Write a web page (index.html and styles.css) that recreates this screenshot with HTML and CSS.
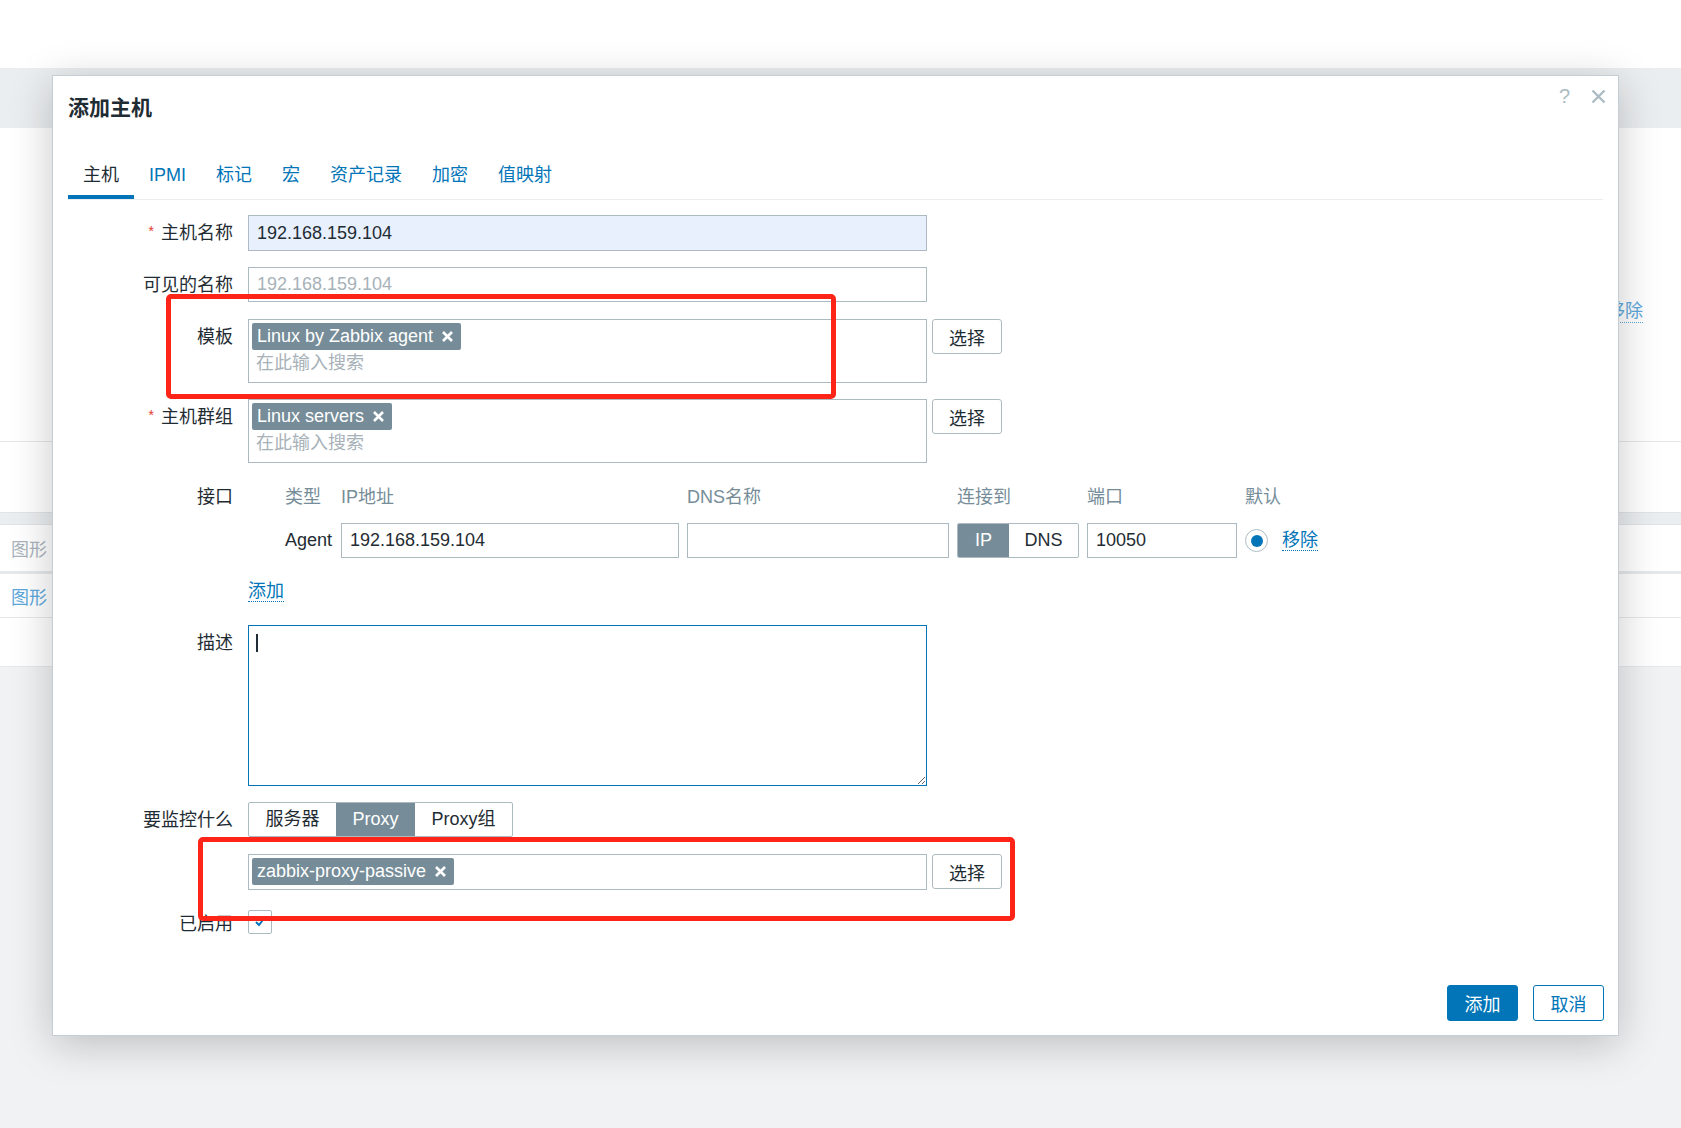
FILE: index.html
```html
<!DOCTYPE html>
<html lang="zh-CN">
<head>
<meta charset="utf-8">
<title>添加主机</title>
<link rel="stylesheet" href="styles.css">
</head>
<body>
<div class="page">
  <div class="page-top"></div>
  <div class="page-band"></div>
  <section class="page-panel">
    <div class="panel-row-tall"><a class="bg-link">移除</a></div>
    <div class="panel-row-short"></div>
  </section>
  <div class="page-strip"></div>
  <div class="table-row"><span class="bg-muted">图形</span></div>
  <div class="table-sep"></div>
  <div class="table-row table-row-2"><span class="bg-blue">图形</span></div>
  <div class="table-row-empty"></div>
</div>

<div class="dialog" role="dialog">
  <div class="dialog-head">
    <h4 class="dialog-title">添加主机</h4>
    <div class="dialog-tools">
      <span class="tool-help">?</span>
      <svg class="tool-close" width="15" height="15" viewBox="0 0 15 15"><path d="M1.5 1.5 L13.5 13.5 M13.5 1.5 L1.5 13.5" stroke="#acbbc2" stroke-width="2.4" fill="none"/></svg>
    </div>
  </div>

  <div class="dialog-body">
    <ul class="tabs">
      <li class="tab active">主机</li>
      <li class="tab">IPMI</li>
      <li class="tab">标记</li>
      <li class="tab">宏</li>
      <li class="tab">资产记录</li>
      <li class="tab">加密</li>
      <li class="tab">值映射</li>
    </ul>

    <div class="form">
      <div class="label req">主机名称</div>
      <div class="field"><input class="input filled" type="text" value="192.168.159.104"></div>

      <div class="label">可见的名称</div>
      <div class="field"><input class="input short" type="text" placeholder="192.168.159.104"></div>

      <div class="label">模板</div>
      <div class="field ms-row">
        <div class="ms">
          <div class="ms-tags">
            <span class="ms-tag">Linux by Zabbix agent<svg width="13" height="13" viewBox="0 0 13 13"><path d="M2 2 L11 11 M11 2 L2 11" stroke="#fff" stroke-width="2.6" fill="none"/></svg></span>
          </div>
          <input class="ms-search" type="text" placeholder="在此输入搜索">
        </div>
        <button class="btn-select" type="button">选择</button>
      </div>

      <div class="label req">主机群组</div>
      <div class="field ms-row">
        <div class="ms">
          <div class="ms-tags">
            <span class="ms-tag">Linux servers<svg width="13" height="13" viewBox="0 0 13 13"><path d="M2 2 L11 11 M11 2 L2 11" stroke="#fff" stroke-width="2.6" fill="none"/></svg></span>
          </div>
          <input class="ms-search" type="text" placeholder="在此输入搜索">
        </div>
        <button class="btn-select" type="button">选择</button>
      </div>

      <div class="label">接口</div>
      <div class="field">
        <div class="iface">
          <div class="iface-h">类型</div>
          <div class="iface-h">IP地址</div>
          <div class="iface-h">DNS名称</div>
          <div class="iface-h">连接到</div>
          <div class="iface-h">端口</div>
          <div class="iface-h">默认</div>
          <div></div>

          <div class="iface-type">Agent</div>
          <input class="input iface-input" type="text" value="192.168.159.104">
          <input class="input iface-input" type="text" value="">
          <div class="toggle"><span class="on">IP</span><span class="off">DNS</span></div>
          <input class="input iface-input" type="text" value="10050">
          <div class="radio"></div>
          <div class="iface-remove"><a class="link">移除</a></div>
        </div>
        <div class="iface-add"><a class="link">添加</a></div>
      </div>

      <div class="label">描述</div>
      <div class="field">
        <div class="ta-wrap">
          <textarea class="textarea"></textarea>
          <span class="caret"></span>
        </div>
      </div>

      <div class="label">要监控什么</div>
      <div class="field">
        <div class="seg"><span>服务器</span><span class="on">Proxy</span><span>Proxy组</span></div>
      </div>

      <div class="label"></div>
      <div class="field ms-row">
        <div class="ms single">
          <div class="ms-tags">
            <span class="ms-tag">zabbix-proxy-passive<svg width="13" height="13" viewBox="0 0 13 13"><path d="M2 2 L11 11 M11 2 L2 11" stroke="#fff" stroke-width="2.6" fill="none"/></svg></span>
          </div>
        </div>
        <button class="btn-select" type="button">选择</button>
      </div>

      <div class="label">已启用</div>
      <div class="field check-row">
        <span class="checkbox"><svg width="14" height="14" viewBox="0 0 14 14"><path d="M3 7 L6 10 L11 3.5" stroke="#0275b8" stroke-width="2" fill="none"/></svg></span>
      </div>
    </div>
  </div>

  <div class="dialog-foot">
    <button class="btn btn-primary" type="button">添加</button>
    <button class="btn btn-alt" type="button">取消</button>
  </div>
</div>

<div class="mark mark-1"></div>
<div class="mark mark-2"></div>
</body>
</html>
```

FILE: styles.css
```css
* { box-sizing: border-box; }

html, body {
  margin: 0;
  padding: 0;
}

body {
  position: relative;
  width: 1681px;
  height: 1128px;
  overflow: hidden;
  background: #f0f2f4;
  font-family: "Liberation Sans", Arial, "Noto Sans CJK SC", sans-serif;
  font-size: 18px;
  color: #1f2c33;
}

/* ---------- background page ---------- */
.page-top { height: 68px; background: #fff; }
.page-band { height: 60px; background: #ebeef0; }
.page-panel { background: #fff; }
.panel-row-tall {
  height: 314px;
  border-bottom: 1px solid #e4e8eb;
  display: flex;
  justify-content: flex-end;
  align-items: flex-start;
  padding: 172px 38px 0 0;
}
.bg-link {
  color: #5ea8db;
  line-height: 22px;
  border-bottom: 1px dotted #5ea8db;
}
.panel-row-short { height: 70px; }
.page-strip {
  height: 13px;
  background: #ebeef0;
  border-top: 1px solid #e0e4e7;
  border-bottom: 1px solid #e0e4e7;
}
.table-row {
  height: 46px;
  background: #fff;
  display: flex;
  align-items: center;
  padding-left: 11px;
}
.table-row-2 { height: 44px; border-bottom: 1px solid #e6e9ec; }
.table-sep { height: 3px; background: #e6e9ec; }
.table-row-empty { height: 49px; background: #fff; border-bottom: 1px solid #e6e9ec; }
.bg-muted { color: #aab4bc; }
.bg-blue { color: #5ea8db; }

/* ---------- dialog ---------- */
.dialog {
  position: absolute;
  left: 52px;
  top: 75px;
  width: 1567px;
  height: 961px;
  background: #fff;
  border: 1px solid #c5ced4;
  box-shadow: 0 8px 40px rgba(0, 0, 0, 0.22);
  display: flex;
  flex-direction: column;
}

.dialog-head { padding: 17px 15px 0; }
.dialog-title {
  margin: 0;
  height: 30px;
  font-size: 21px;
  line-height: 30px;
  font-weight: bold;
  color: #1f2c33;
}
.dialog-tools {
  position: absolute;
  top: 10px;
  right: 12px;
  height: 20px;
  display: flex;
  align-items: center;
  gap: 21px;
}
.tool-help {
  font-size: 20px;
  line-height: 20px;
  color: #acbbc2;
}
.tool-close { display: block; }

.dialog-body {
  flex: 1;
  padding: 30px 15px 0;
}

.tabs {
  list-style: none;
  margin: 0;
  padding: 0;
  display: flex;
  border-bottom: 1px solid #ebeef0;
}
.tab {
  height: 46px;
  padding: 9px 15px 6px;
  line-height: 27px;
  border-bottom: 4px solid transparent;
  color: #0275b8;
  white-space: nowrap;
}
.tab.active {
  color: #1f2c33;
  border-bottom-color: #0275b8;
}

/* ---------- form ---------- */
.form {
  display: grid;
  grid-template-columns: 165px auto;
  column-gap: 15px;
  row-gap: 16px;
  padding-top: 15px;
  align-items: start;
  justify-content: start;
}
.label {
  height: 36px;
  text-align: right;
  line-height: 36px;
  white-space: nowrap;
  color: #1f2c33;
}
.req::before {
  content: "*";
  position: relative;
  top: -3px;
  color: #e33734;
  font-size: 14px;
  line-height: 14px;
  margin-right: 7px;
}

.input {
  display: block;
  width: 679px;
  height: 36px;
  border: 1px solid #acbbc2;
  border-radius: 0;
  padding: 0 8px;
  font: inherit;
  color: #1f2c33;
  background: #fff;
  outline: none;
}
.input.short { height: 35px; }
.input.filled { background: #e8f0fe; }
.input::placeholder { color: #a7b2b9; }

/* multiselect */
.ms-row {
  display: flex;
  gap: 5px;
  align-items: flex-start;
}
.ms {
  width: 679px;
  height: 64px;
  border: 1px solid #acbbc2;
  padding: 3px 3px 5px;
  background: #fff;
}
.ms.single { height: 36px; padding: 3px 3px 4px; }
.ms-tags { display: flex; gap: 4px; height: 27px; }
.ms-tag {
  display: inline-flex;
  align-items: center;
  height: 27px;
  padding: 0 7px 0 5px;
  background: #768d99;
  color: #fff;
  border-radius: 2px;
  line-height: 27px;
  white-space: nowrap;
}
.ms-tag svg { margin-left: 8px; display: block; }
.ms-search {
  display: block;
  width: 100%;
  height: 27px;
  border: none;
  padding: 0 4px;
  font: inherit;
  outline: none;
  background: transparent;
}
.ms-search::placeholder { color: #a7b2b9; }

.btn-select {
  width: 70px;
  height: 35px;
  border: 1px solid #acbbc2;
  border-radius: 3px;
  background: #fff;
  font: inherit;
  color: #1f2c33;
  padding: 0;
}

/* interfaces */
.iface {
  padding-left: 37px;
  display: grid;
  grid-template-columns: 48px 338px 262px 122px 150px 29px auto;
  grid-template-rows: 36px 35px;
  column-gap: 8px;
  row-gap: 8px;
  align-items: center;
  justify-content: start;
}
.iface-h {
  height: 36px;
  color: #768d99;
  line-height: 36px;
  white-space: nowrap;
}
.iface-type { height: 35px; line-height: 35px; }
.iface-remove { height: 35px; line-height: 35px; }
.iface-input { width: 100%; height: 35px; }
.toggle {
  display: flex;
  height: 35px;
  border: 1px solid #acbbc2;
  border-radius: 2px;
  overflow: hidden;
}
.toggle span { line-height: 33px; text-align: center; }
.toggle .on { width: 51px; background: #768d99; color: #fff; }
.toggle .off { flex: 1; }
.radio {
  width: 23px;
  height: 23px;
  border: 1px solid #acbbc2;
  border-radius: 50%;
  background: #fff;
  display: flex;
  align-items: center;
  justify-content: center;
}
.radio::after {
  content: "";
  width: 12px;
  height: 12px;
  border-radius: 50%;
  background: #0275b8;
}
.link {
  color: #0275b8;
  text-decoration: none;
  border-bottom: 1px dotted #0275b8;
  white-space: nowrap;
}
.iface-add {
  height: 36px;
  margin-top: 15px;
  line-height: 36px;
}

/* textarea */
.ta-wrap {
  position: relative;
  width: 679px;
  height: 161px;
}
.textarea {
  display: block;
  width: 679px;
  height: 161px;
  border: 1px solid #0275b8;
  border-radius: 0;
  padding: 6px 8px;
  font: inherit;
  color: #1f2c33;
  resize: both;
  outline: none;
}
.caret {
  position: absolute;
  left: 8px;
  top: 9px;
  width: 2px;
  height: 18px;
  background: #1f2c33;
}

/* segmented radio */
.seg {
  display: flex;
  width: max-content;
  height: 35px;
  border: 1px solid #acbbc2;
  border-radius: 2px;
  overflow: hidden;
}
.seg span {
  padding: 0 16.5px;
  line-height: 33px;
  white-space: nowrap;
}
.seg .on { background: #768d99; color: #fff; }

/* checkbox */
.check-row {
  height: 36px;
  display: flex;
  align-items: flex-start;
}
.checkbox {
  width: 24px;
  height: 24px;
  margin-top: 4px;
  border: 1px solid #acbbc2;
  border-radius: 2px;
  background: #fff;
  display: flex;
  align-items: center;
  justify-content: center;
}
.checkbox svg { display: block; }

/* footer */
.dialog-foot {
  display: flex;
  justify-content: flex-end;
  gap: 15px;
  padding: 0 14px 14px;
}
.btn {
  width: 71px;
  height: 36px;
  border-radius: 3px;
  font: inherit;
  padding: 0;
}
.btn-primary { background: #0275b8; color: #fff; border: 1px solid #0275b8; }
.btn-alt { background: #fff; color: #0275b8; border: 1px solid #0275b8; }

/* annotation marks drawn over the screenshot */
.mark {
  position: absolute;
  border: 5px solid #ff2418;
  border-radius: 5px;
  pointer-events: none;
}
.mark-1 { left: 166px; top: 294px; width: 670px; height: 105px; }
.mark-2 { left: 198px; top: 837px; width: 817px; height: 84px; }
```
